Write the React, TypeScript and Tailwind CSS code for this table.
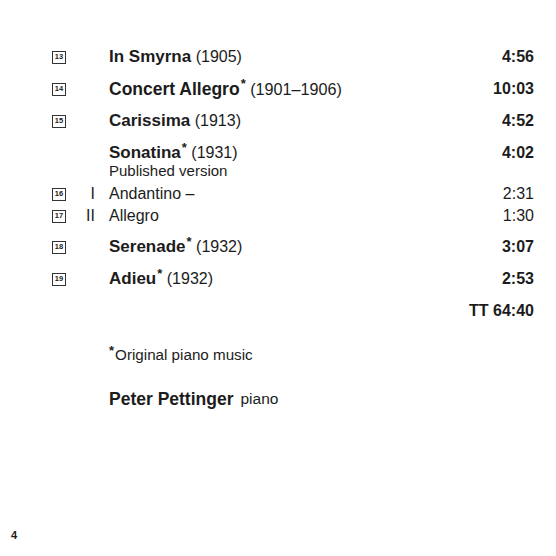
import React from "react";

function Box({ n }: { n: string }) {
  return (
    <div className="w-[14px] h-[13px] shrink-0 border border-[#333] flex items-center justify-center text-[7.5px] leading-none font-bold text-[#222]">
      {n}
    </div>
  );
}

function Star() {
  return (
    <span className="inline-block align-top text-[13px] leading-none font-bold relative top-[1px] ml-[1px]">*</span>
  );
}

function Line({
  box,
  num,
  children,
  time,
  className,
  timeBold = true,
}: {
  box?: string;
  num?: string;
  children?: React.ReactNode;
  time?: string;
  className: string;
  timeBold?: boolean;
}) {
  return (
    <div className={"flex items-center " + className}>
      <div className="w-[14px] flex items-center">{box ? <Box n={box} /> : null}</div>
      <div className="w-[29px] text-right text-[16px]">{num}</div>
      <div className="ml-[14px] flex-1 whitespace-nowrap">{children}</div>
      <div className={"text-right text-[16px] " + (timeBold ? "font-bold" : "")}>{time}</div>
    </div>
  );
}

export default function App() {
  return (
    <div
      className="w-[556px] h-[556px] bg-white text-[#1c1c1c] relative"
      style={{ fontFamily: '"Liberation Sans", Arial, sans-serif' }}
    >
      <div className="pl-[52px] pr-[22px] pt-[45px]">
        <Line box="13" time="4:56" className="h-[24px]">
          <span className="font-bold text-[17px]">In Smyrna</span>{" "}
          <span className="text-[16px]">(1905)</span>
        </Line>
        <Line box="14" time="10:03" className="h-[24px] mt-[8px]">
          <span className="font-bold text-[17.5px]">Concert Allegro</span>
          <Star />{" "}
          <span className="text-[16.2px]">(1901–1906)</span>
        </Line>
        <Line box="15" time="4:52" className="h-[24px] mt-[8px]">
          <span className="font-bold text-[17px]">Carissima</span>{" "}
          <span className="text-[16px]">(1913)</span>
        </Line>
        <Line time="4:02" className="h-[20px] mt-[10px]">
          <span className="font-bold text-[17px]">Sonatina</span>
          <Star />{" "}
          <span className="text-[16px]">(1931)</span>
        </Line>
        <Line className="h-[16px]">
          <span className="text-[15px]">Published version</span>
        </Line>
        <Line box="16" num="I" time="2:31" timeBold={false} className="h-[20px] mt-[5px]">
          <span className="text-[16px]">Andantino –</span>
        </Line>
        <Line box="17" num="II" time="1:30" timeBold={false} className="h-[20px] mt-[2px]">
          <span className="text-[16px]">Allegro</span>
        </Line>
        <Line box="18" time="3:07" className="h-[24px] mt-[9px]">
          <span className="font-bold text-[17px]">Serenade</span>
          <Star />{" "}
          <span className="text-[16px]">(1932)</span>
        </Line>
        <Line box="19" time="2:53" className="h-[24px] mt-[8px]">
          <span className="font-bold text-[17px]">Adieu</span>
          <Star />{" "}
          <span className="text-[16px]">(1932)</span>
        </Line>
        <Line time="TT 64:40" className="h-[24px] mt-[8px]" />
        <div className="ml-[57px] mt-[22px] h-[20px] flex items-center text-[15px] whitespace-nowrap">
          <span className="font-bold text-[13px] leading-none relative -top-[5px] mr-[1px]">*</span>
          <span className="text-[15.2px]">Original piano music</span>
        </div>
        <div className="ml-[57px] mt-[24px] h-[20px] flex items-center whitespace-nowrap">
          <span className="font-bold text-[17.5px]">Peter Pettinger</span>
          <span className="text-[15.5px] ml-[7px]">piano</span>
        </div>
      </div>
      <div className="absolute left-[11px] top-[530px] text-[11px] font-semibold leading-none">4</div>
    </div>
  );
}
